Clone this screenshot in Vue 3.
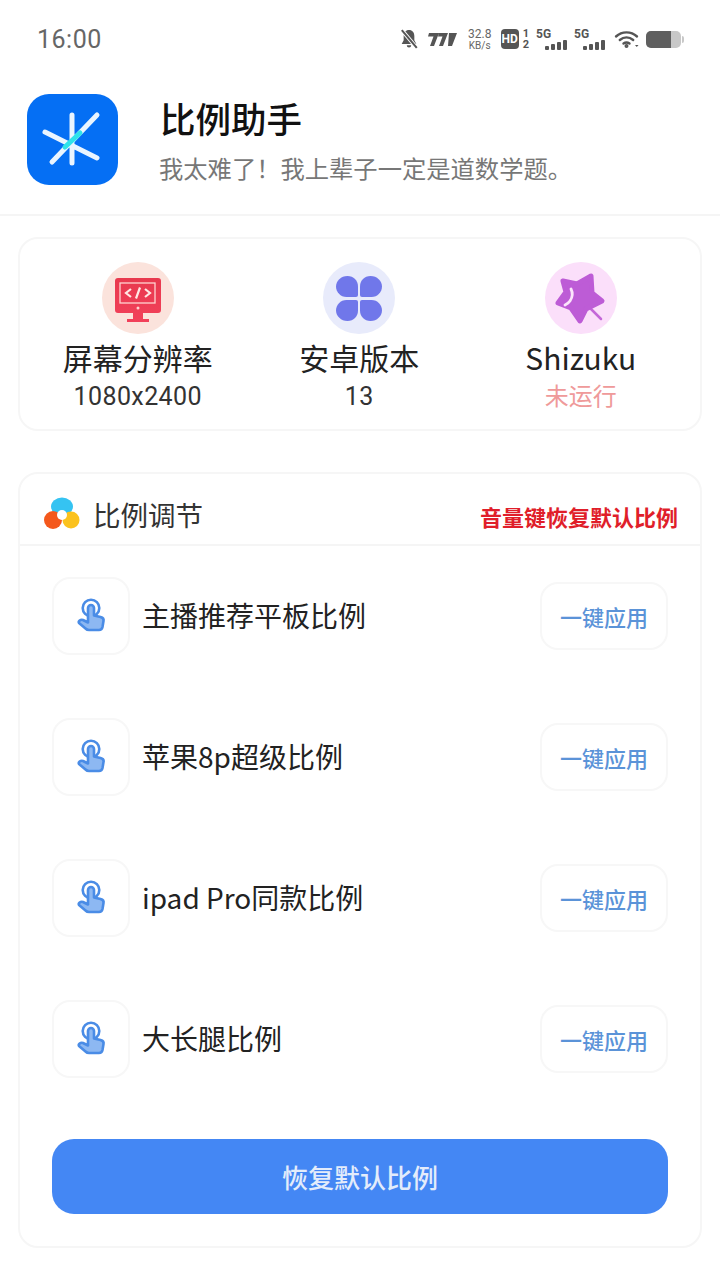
<script setup>
const infoItems = [
  { key: 'screen', title: '屏幕分辨率', value: '1080x2400' },
  { key: 'android', title: '安卓版本', value: '13' },
  { key: 'shizuku', title: 'Shizuku', value: '未运行', off: true }
]

const ratios = ['主播推荐平板比例', '苹果8p超级比例', 'ipad Pro同款比例', '大长腿比例']
</script>

<template>
  <div class="page">
    <div class="status-bar">
      <span class="time">16:00</span>
      <div class="status-icons">
        <!-- muted bell -->
        <svg class="bell" width="20" height="20" viewBox="0 0 18 18">
          <path d="M9 1c-3 0-4.800 2.400-4.800 5.300v3.800L2.400 13.500h13.200l-1.800-3.400V6.300C13.800 3.400 12 1 9 1z" fill="#555" />
          <path d="M7 14.700a2 2 0 0 0 4 0z" fill="#555" />
          <path d="M2.500 1 16 17" stroke="#fff" stroke-width="3.500" />
          <path d="M2.500 1 16 17" stroke="#555" stroke-width="1.800" />
        </svg>
        <svg class="hp" width="31" height="15" viewBox="0 0 31 15">
          <path d="M3 1h10L8 14H4l3.500-9.500H2zM13 1h9l-5 13h-4l3.500-9.500H12zM23 1h8l-5 13h-4z" fill="#555" />
        </svg>
        <div class="speed"><span>32.8</span><span class="unit">KB/s</span></div>
        <div class="hd"><span class="hd-box">HD</span><span class="hd-num">1<br />2</span></div>
        <div v-for="n in 2" :key="n" class="signal">
          <span class="five-g">5G</span>
          <div class="bars"><i></i><i></i><i></i><i></i></div>
        </div>
        <svg class="wifi" width="26" height="18" viewBox="0 0 26 18" fill="none" stroke="#555" stroke-width="2.400" stroke-linecap="round">
          <path d="M2 6.500c6-5.500 15-5.500 21 0" />
          <path d="M5.800 10c4-3.300 9.400-3.300 13.400 0" />
          <path d="M9.500 13.500c2-1.400 4-1.400 6 0" />
          <circle cx="12.500" cy="16" r="0.800" fill="#555" />
          <path d="M21 15h3.500l-1.700 2z" fill="#555" stroke="none" />
        </svg>
        <div class="battery"><div class="battery-fill"></div></div>
        <div class="battery-nub"></div>
      </div>
    </div>

    <header class="app-header">
      <div class="logo">
        <svg width="91" height="91" viewBox="0 0 91 91" stroke-linecap="round" fill="none">
          <path d="M45 21v48M18 38l52 26M25 68l45-47" stroke="#eaf5ff" stroke-width="5" />
          <path d="M38 53l15-14" stroke="#2fe3ea" stroke-width="5" />
        </svg>
      </div>
      <div class="app-text">
        <h1>比例助手</h1>
        <p>我太难了！我上辈子一定是道数学题。</p>
      </div>
    </header>

    <section class="card info-card">
      <div v-for="item in infoItems" :key="item.key" class="info-item">
        <div class="info-icon" :class="item.key">
          <svg v-if="item.key === 'screen'" width="72" height="72" viewBox="0 0 72 72">
            <defs>
              <linearGradient id="screenGrad" x1="0" y1="0" x2="0" y2="1">
                <stop offset="0" stop-color="#e8394e" />
                <stop offset="1" stop-color="#f2405a" />
              </linearGradient>
            </defs>
            <path d="M16 16h40a3 3 0 0 1 3 3v29a3 3 0 0 1-3 3H41v6h6v3H25v-3h6v-6H16a3 3 0 0 1-3-3V19a3 3 0 0 1 3-3z" fill="url(#screenGrad)" />
            <rect x="18" y="21" width="35" height="20" fill="none" stroke="#ffd3d0" stroke-width="1.300" />
            <path d="M29 27l-5 4 5 4M43 27l5 4-5 4M38 25.500l-4 11" stroke="#ffe8e4" stroke-width="2.200" fill="none" />
            <circle cx="36" cy="46" r="1.500" fill="#ffd3d0" />
          </svg>
          <svg v-else-if="item.key === 'android'" width="72" height="72" viewBox="0 0 72 72" fill="#7077ea">
            <path d="M24.500 14c6 0 10.500 4.500 10.500 10.500V33a2 2 0 0 1-2 2h-9.500C17.500 35 13 30 13 24.500S18 14 24.500 14z" />
            <path d="M47.500 14C41.500 14 37 18.500 37 24.500V33a2 2 0 0 0 2 2h9.500C54.500 35 59 30 59 24.500S54 14 47.500 14z" />
            <path d="M24.500 59C18 59 13 54 13 48.500S17.500 38 23.500 38H33a2 2 0 0 1 2 2v8.500C35 54.500 30.500 59 24.500 59z" />
            <path d="M47.500 59C54 59 59 54 59 48.500S54.500 38 48.500 38H39a2 2 0 0 0-2 2v8.500C37 54.500 41.500 59 47.500 59z" />
          </svg>
          <svg v-else width="72" height="72" viewBox="0 0 72 72">
            <path d="M46 47l10 10" stroke="#c468d8" stroke-width="2.500" stroke-linecap="round" />
            <path d="M18 19l14 3 14-8 1 17 10 8-16 8-6 12-9-13-13-5 8-11z" fill="#bd5cd6" stroke="#bd5cd6" stroke-width="5" stroke-linejoin="round" />
            <path d="M26 27c2 4 1 9-1 12-1 1.500-3 3-5 4" stroke="#fbe4fb" stroke-width="2.800" fill="none" stroke-linecap="round" />
          </svg>
        </div>
        <div class="info-title">{{ item.title }}</div>
        <div class="info-value" :class="{ off: item.off }">{{ item.value }}</div>
      </div>
    </section>

    <section class="card ratio-card">
      <div class="ratio-head">
        <div class="ratio-title">
          <svg width="36" height="34" viewBox="0 0 36 34">
            <ellipse cx="18" cy="9.500" rx="11" ry="9" fill="#35c3f2" />
            <circle cx="9" cy="23" r="9" fill="#f4581c" />
            <circle cx="27" cy="23" r="8.500" fill="#fbc21e" />
            <circle cx="18" cy="18" r="5" fill="#fff" />
          </svg>
          <span>比例调节</span>
        </div>
        <span class="ratio-tip">音量键恢复默认比例</span>
      </div>

      <div class="ratio-list">
        <div v-for="name in ratios" :key="name" class="ratio-row">
          <div class="ratio-icon">
            <svg width="30" height="36" viewBox="0 0 30 36" fill="none" stroke="#4a8ce6" stroke-width="2.600" stroke-linejoin="round">
              <circle cx="15" cy="10" r="8.300" />
              <path d="M12 10a3 3 0 0 1 6 0v7.500l6.500 1.500c2.500.7 3.500 2 3 4l-1 6c-.4 2-1.500 3-3.500 3H13c-1.500 0-2.500-.5-3.500-1.500L3 25c-1-1.500 1.500-4 4-3l5 2.500z" fill="#8db8f2" />
            </svg>
          </div>
          <span class="ratio-name">{{ name }}</span>
          <button class="apply-btn" type="button">一键应用</button>
        </div>
      </div>

      <button class="restore-btn" type="button">恢复默认比例</button>
    </section>
  </div>
</template>

<style>
html, body {
  margin: 0;
  background: #fff;
}
</style>

<style scoped>
.page {
  width: 720px;
  height: 1280px;
  overflow: hidden;
  background: #fff;
  font-family: "Noto Sans CJK SC", "Noto Sans", sans-serif;
  color: #222;
}

.status-bar {
  height: 78px;
  display: flex;
  align-items: center;
  justify-content: space-between;
  padding: 0 37px;
  box-sizing: border-box;
}
.time {
  font-family: Roboto, sans-serif;
  font-size: 25px;
  color: #666;
  letter-spacing: 0.5px;
}
.status-icons {
  display: flex;
  align-items: center;
}
.bell {
  margin-right: 7px;
}
.hp {
  margin-right: 10px;
}
.speed {
  display: flex;
  flex-direction: column;
  align-items: center;
  width: 26px;
  margin-right: 8px;
  font-family: Roboto, sans-serif;
  font-size: 12px;
  line-height: 12px;
  color: #666;
}
.speed .unit {
  font-size: 10px;
  line-height: 11px;
}
.hd {
  display: flex;
  align-items: center;
  gap: 4px;
  margin-right: 7px;
}
.hd-box {
  background: #555;
  color: #fff;
  border-radius: 4px;
  font-family: Roboto, sans-serif;
  font-weight: 700;
  font-size: 12px;
  line-height: 20px;
  width: 18px;
  text-align: center;
}
.hd-num {
  font-family: Roboto, sans-serif;
  font-weight: 700;
  font-size: 11px;
  line-height: 11px;
  color: #555;
}
.signal {
  width: 32px;
  height: 22px;
  margin-right: 6px;
  position: relative;
}
.five-g {
  position: absolute;
  left: 0;
  top: -1px;
  font-family: Roboto, sans-serif;
  font-weight: 700;
  font-size: 12px;
  line-height: 14px;
  color: #555;
}
.bars {
  position: absolute;
  right: 1px;
  bottom: 0;
  display: flex;
  align-items: flex-end;
  gap: 2px;
}
.bars i {
  display: block;
  width: 4px;
  background: #555;
  border-radius: 1px;
}
.bars i:nth-child(1) { height: 4px; }
.bars i:nth-child(2) { height: 6px; }
.bars i:nth-child(3) { height: 8px; }
.bars i:nth-child(4) { height: 10px; }
.wifi {
  margin-left: 2px;
  margin-right: 6px;
}
.battery {
  width: 35px;
  height: 17px;
  border-radius: 5px;
  background: #c8c8c8;
  overflow: hidden;
}
.battery-fill {
  width: 25px;
  height: 100%;
  background: #5f5f5f;
}
.battery-nub {
  width: 2px;
  height: 7px;
  margin-left: 1px;
  border-radius: 0 2px 2px 0;
  background: #c8c8c8;
  margin-right: -1px;
}

.app-header {
  height: 138px;
  display: flex;
  align-items: flex-start;
  border-bottom: 2px solid #f5f5f5;
  box-sizing: border-box;
  padding: 16px 0 0 27px;
}
.logo {
  width: 91px;
  height: 91px;
  border-radius: 22px;
  background: #056ff4;
  flex: none;
}
.logo svg {
  display: block;
}
.app-text {
  margin-left: 41px;
  padding-top: 1px;
}
.app-text h1 {
  margin: 0 0 0 1px;
  font-size: 35.500px;
  font-weight: 500;
  line-height: 46px;
  color: #111;
}
.app-text p {
  margin: 11px 0 0 0;
  font-size: 24.300px;
  line-height: 32px;
  color: #777;
}

.card {
  background: #fff;
  border: 2px solid #f6f6f6;
  border-radius: 20px;
  box-sizing: border-box;
  margin: 0 18px;
}
.info-card {
  height: 194px;
  margin-top: 21px;
  display: grid;
  grid-template-columns: repeat(3, 221.5px);
  padding: 23px 0 0 7px;
}
.info-item {
  display: flex;
  flex-direction: column;
  align-items: center;
}
.info-icon {
  width: 72px;
  height: 72px;
  border-radius: 50%;
  flex: none;
}
.info-icon svg {
  display: block;
}
.info-icon.screen { background: #fbe3dc; }
.info-icon.android { background: #e8ebfb; }
.info-icon.shizuku { background: #fbdffa; }
.info-title {
  font-size: 30px;
  line-height: 38px;
  margin-top: 4px;
  color: #222;
}
.info-value {
  font-family: Roboto, "Noto Sans CJK SC", sans-serif;
  font-size: 25px;
  letter-spacing: 0.4px;
  line-height: 34px;
  margin-top: 4px;
  color: #333;
}
.info-value.off {
  font-size: 24px;
  letter-spacing: 0;
  color: #ef9a9a;
}

.ratio-card {
  height: 776px;
  margin-top: 41px;
  display: flex;
  flex-direction: column;
}
.ratio-head {
  height: 72px;
  flex: none;
  display: flex;
  align-items: center;
  justify-content: space-between;
  padding: 9px 22px 0 24px;
  border-bottom: 2px solid #f5f5f5;
  box-sizing: border-box;
}
.ratio-title {
  display: flex;
  align-items: center;
  gap: 13px;
  font-size: 27.500px;
  color: #333;
}
.ratio-tip {
  font-size: 22px;
  font-weight: 700;
  color: #e01e2a;
  margin-top: 4px;
}
.ratio-list {
  flex: 1;
  padding: 30px 32px 0 32px;
  display: flex;
  flex-direction: column;
  gap: 61px;
}
.ratio-row {
  height: 80px;
  display: flex;
  align-items: center;
}
.ratio-icon {
  width: 78px;
  height: 78px;
  border: 2px solid #f7f7f7;
  border-radius: 18px;
  box-sizing: border-box;
  display: flex;
  align-items: center;
  justify-content: center;
  flex: none;
}
.ratio-name {
  margin-left: 12px;
  margin-top: -2px;
  font-size: 28px;
  color: #222;
  flex: 1;
}
.apply-btn {
  width: 128px;
  height: 68px;
  background: #fff;
  border: 2px solid #f7f7f7;
  border-radius: 18px;
  font-family: inherit;
  font-size: 22px;
  font-weight: 500;
  color: #5b93d8;
  padding: 0;
  flex: none;
}
.restore-btn {
  flex: none;
  height: 75px;
  margin: 0 32px 32px;
  background: #4487f4;
  border: none;
  border-radius: 22px;
  color: #e3ecfb;
  font-family: inherit;
  font-size: 26px;
  font-weight: 500;
}
</style>
